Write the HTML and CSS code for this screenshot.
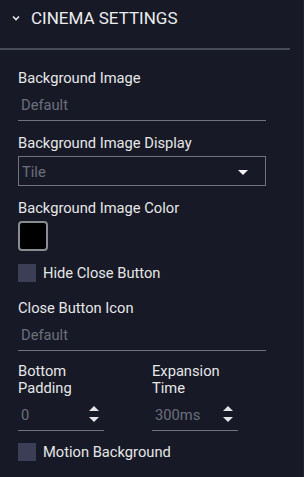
FILE: index.html
```html
<!DOCTYPE html>
<html lang="en">
<head>
    <meta charset="UTF-8">
    <meta name="viewport" content="width=device-width, initial-scale=1.0">
    <title>Cinema Settings</title>
    <link rel="stylesheet" href="styles.css">
</head>
<body>
    <div class="panel">
        <div class="panel-header">
            <svg class="chevron" width="8" height="6" viewBox="0 0 8 6">
                <path d="M1 1.5 L4 4.5 L7 1.5" fill="none" stroke="#e8e8ea" stroke-width="1.6"/>
            </svg>
            <span class="panel-title">CINEMA SETTINGS</span>
        </div>

        <div class="panel-body">
            <div class="field">
                <label class="field-label">Background Image</label>
                <div class="text-input placeholder">Default</div>
            </div>

            <div class="field">
                <label class="field-label">Background Image Display</label>
                <div class="select-box">
                    <span class="placeholder">Tile</span>
                    <svg class="select-arrow" width="10" height="5" viewBox="0 0 10 5">
                        <path d="M0 0 L10 0 L5 5 Z" fill="#f2f2f2"/>
                    </svg>
                </div>
            </div>

            <div class="field">
                <label class="field-label">Background Image Color</label>
                <div class="color-swatch"></div>
            </div>

            <div class="check-row">
                <span class="checkbox"></span>
                <span class="check-label">Hide Close Button</span>
            </div>

            <div class="field field-wide">
                <label class="field-label">Close Button Icon</label>
                <div class="text-input placeholder">Default</div>
            </div>

            <div class="field-columns">
                <div class="field-col">
                    <label class="field-label tight">Bottom<br>Padding</label>
                    <div class="text-input number-input">
                        <span class="placeholder">0</span>
                        <svg class="spinner" width="10" height="16" viewBox="0 0 10 16">
                            <path d="M0 5 L5 0 L10 5 Z" fill="#e4e4e6"/>
                            <path d="M0 11 L10 11 L5 16 Z" fill="#e4e4e6"/>
                        </svg>
                    </div>
                </div>
                <div class="field-col">
                    <label class="field-label tight">Expansion<br>Time</label>
                    <div class="text-input number-input">
                        <span class="placeholder">300ms</span>
                        <svg class="spinner" width="10" height="16" viewBox="0 0 10 16">
                            <path d="M0 5 L5 0 L10 5 Z" fill="#e4e4e6"/>
                            <path d="M0 11 L10 11 L5 16 Z" fill="#e4e4e6"/>
                        </svg>
                    </div>
                </div>
            </div>

            <div class="check-row last">
                <span class="checkbox"></span>
                <span class="check-label">Motion Background</span>
            </div>
        </div>
    </div>
</body>
</html>
```

FILE: styles.css
```css
body {
    margin: 0;
    background-color: #171a26;
    font-family: Roboto, "Liberation Sans", sans-serif;
    color: #e6e6e8;
}

.panel {
    width: 303px;
    height: 477px;
    border-right: 1px solid #20232f;
    overflow: hidden;
}

.panel-header {
    display: flex;
    align-items: center;
    width: 278px;
    padding: 8px 0 20px 12px;
    border-bottom: 2px solid #474a57;
}

.chevron {
    display: block;
    margin-right: 11px;
}

.panel-title {
    font-size: 17px;
    line-height: 20px;
    color: #ececee;
}

.panel-body {
    padding: 0 18px;
    width: 248px;
}

.field {
    margin-top: 13px;
}

.field:first-child {
    margin-top: 19px;
}

.field-wide {
    margin-top: 17px;
}

.field-label {
    display: block;
    font-size: 14.7px;
    line-height: 18px;
    color: #e6e6e8;
}

.field-label.tight {
    line-height: 17px;
}

.placeholder {
    color: #6c6f7d;
}

.text-input {
    font-size: 14.7px;
    line-height: 18px;
    padding: 9px 3px 6px;
    border-bottom: 1px solid #6f727e;
}

.select-box {
    display: flex;
    justify-content: space-between;
    align-items: center;
    margin-top: 4px;
    height: 28px;
    padding: 0 17px 0 3px;
    border: 1px solid #70737f;
    font-size: 14.7px;
    line-height: 18px;
}

.select-box .placeholder {
    padding-top: 2px;
}

.select-arrow {
    display: block;
    margin-top: 2px;
}

.color-swatch {
    width: 26px;
    height: 26px;
    margin-top: 4px;
    background-color: #000;
    border: 2px solid #8a8c94;
    border-radius: 4px;
}

.check-row {
    display: flex;
    align-items: center;
    gap: 7px;
    margin-top: 13px;
}

.check-row.last {
    margin-top: 12px;
}

.checkbox {
    width: 18px;
    height: 18px;
    background-color: #3c3e55;
}

.check-label {
    font-size: 14.7px;
    line-height: 18px;
    color: #e6e6e8;
}

.field-columns {
    display: grid;
    grid-template-columns: 134px 114px;
    margin-top: 12px;
}

.number-input {
    display: flex;
    justify-content: space-between;
    align-items: center;
    width: 78px;
    padding-right: 5px;
}

.spinner {
    display: block;
    margin-top: -2px;
}
```
